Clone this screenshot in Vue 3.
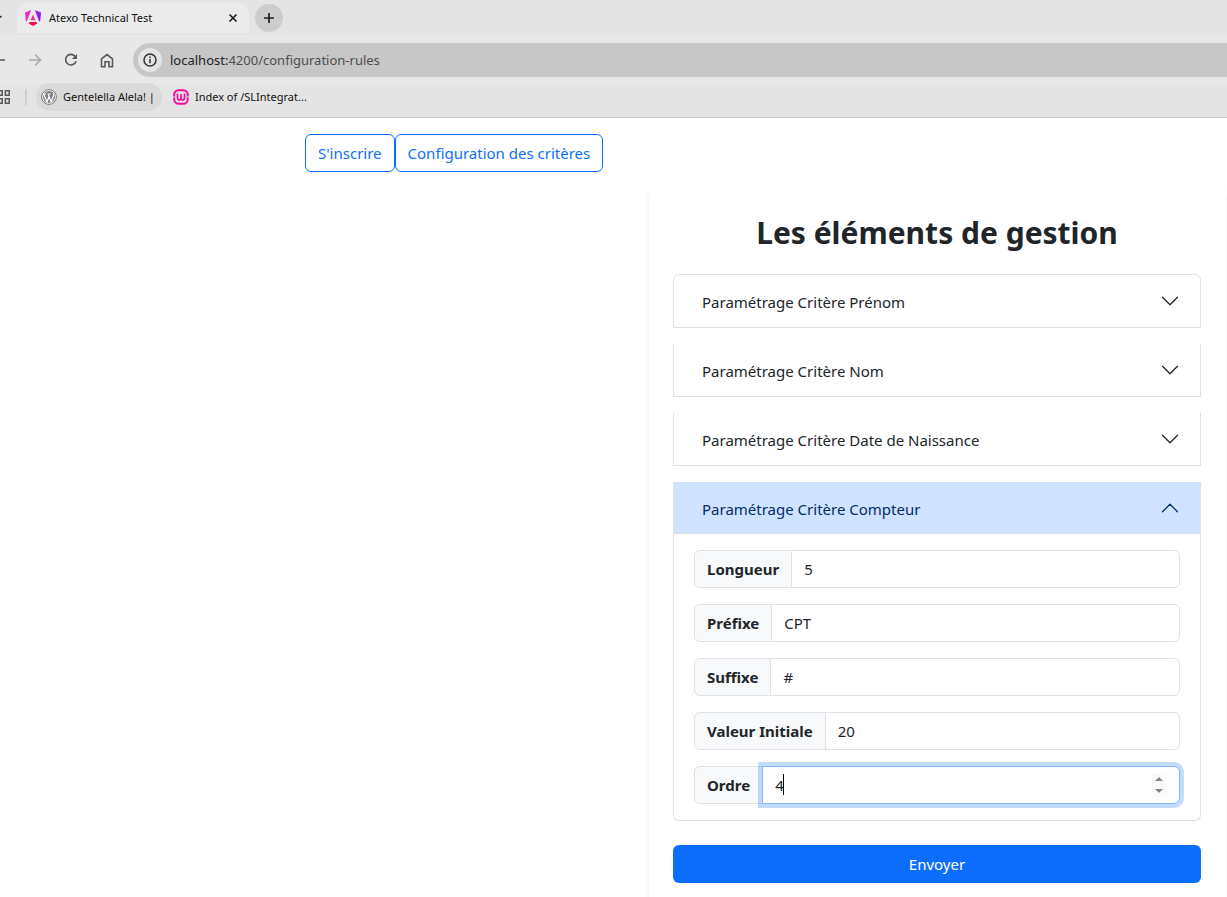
<script setup>
import { ref } from 'vue'

const closedPanels = ['Paramétrage Critère Prénom', 'Paramétrage Critère Nom', 'Paramétrage Critère Date de Naissance']
const fields = ref([
  { id: 'longueur', label: 'Longueur', value: '5', type: 'text' },
  { id: 'prefixe', label: 'Préfixe', value: 'CPT', type: 'text' },
  { id: 'suffixe', label: 'Suffixe', value: '#', type: 'text' },
  { id: 'initiale', label: 'Valeur Initiale', value: '20', type: 'text' },
  { id: 'ordre', label: 'Ordre', value: '4', type: 'number', active: true }
])
</script>

<template>
  <div class="window">
    <header class="chrome">
      <div class="tabs">
        <span class="tab-search"><svg width="4" height="12" viewBox="0 0 4 12"><path d="M0 5.500L1.500 4" stroke="#222" stroke-width="1.500" /></svg></span>
        <div class="tab">
          <svg class="tab-icon" width="16" height="16" viewBox="0 0 16 16">
            <defs>
              <linearGradient id="shield" x1="0" y1="0" x2="1" y2="0">
                <stop offset="0" stop-color="#f02fc0" /><stop offset=".5" stop-color="#e02bd0" /><stop offset="1" stop-color="#7a14f5" />
              </linearGradient>
            </defs>
            <path d="M0 2.500L6.200 0L1.800 11.500L.8 11ZM16 2.500L9.800 0L14.200 11.500L15.200 11Z" fill="url(#shield)" />
            <path d="M8 4.500L10.500 10.300H5.500Z" fill="#ee2a9c" />
            <path d="M4.500 12H11.500L12.300 13.600L8 16L3.700 13.600Z" fill="#f5104c" />
          </svg>
          <span class="tab-title">Atexo Technical Test</span>
          <button class="tab-close" aria-label="Fermer">
            <svg width="10" height="10" viewBox="0 0 10 10"><path d="M1.500 1.500L8.500 8.500M8.500 1.500L1.500 8.500" stroke="#1f1f1f" stroke-width="1.700" /></svg>
          </button>
        </div>
        <button class="new-tab" aria-label="Nouvel onglet">
          <svg width="12" height="12" viewBox="0 0 12 12"><path d="M6 1V11M1 6H11" stroke="#1f1f1f" stroke-width="1.700" /></svg>
        </button>
      </div>
      <div class="toolbar">
        <button class="tool back" aria-label="Retour"><svg width="5" height="14" viewBox="0 0 5 14"><path d="M0 7H5" stroke="#5a5d61" stroke-width="1.600" /></svg></button>
        <button class="tool forward" aria-label="Avancer"><svg width="14" height="14" viewBox="0 0 14 14"><path d="M1 7H12.500M7 1.500L12.500 7L7 12.500" fill="none" stroke="#a9a9a9" stroke-width="1.600" /></svg></button>
        <button class="tool reload" aria-label="Actualiser"><svg width="14" height="14" viewBox="0 0 14 14"><path d="M12 8.200A5.300 5.300 0 1 1 11 3.300L12.500 5" fill="none" stroke="#55585c" stroke-width="1.600" /><path d="M13 1V6H8Z" fill="#55585c" /></svg></button>
        <button class="tool home" aria-label="Accueil"><svg width="14" height="15" viewBox="0 0 14 15"><path d="M1.500 13.700V5.800L7 1.500L12.500 5.800V13.700H9V8.800H5V13.700Z" fill="none" stroke="#55585c" stroke-width="1.600" /></svg></button>
        <div class="address">
          <span class="info"><svg width="16" height="16" viewBox="0 0 16 16"><circle cx="8" cy="8" r="6" fill="none" stroke="#333" stroke-width="1.500" /><path d="M8 7V11.300M8 4.500V6" stroke="#333" stroke-width="1.500" /></svg></span>
          <span><b>localhost:</b>4200/configuration-rules</span>
        </div>
      </div>
      <nav class="bookmarks">
        <svg class="apps" width="10" height="14" viewBox="0 0 10 14"><path d="M-3 .8H2.200V5.200H-3ZM5.400 .8H9.200V5.200H5.400ZM-3 8.800H2.200V13.200H-3ZM5.400 8.800H9.200V13.200H5.400Z" fill="none" stroke="#55585c" stroke-width="1.500" /></svg>
        <span class="separator"></span>
        <a class="bookmark hovered" href="#">
          <svg width="16" height="16" viewBox="0 0 16 16"><circle cx="8" cy="8" r="7.400" fill="#f4f4f4" stroke="#777" /><circle cx="8" cy="8" r="6" fill="#808080" /><path d="M2.600 5L6 13L8 7.500L10.200 13L13 5.500M2 5H5M6.500 5H9.500M7.200 5L8.500 8.500M12 4.500L13 6" fill="none" stroke="#fff" stroke-width="1.200" /></svg>
          <span>Gentelella Alela! |</span>
        </a>
        <a class="bookmark" href="#">
          <svg width="16" height="16" viewBox="0 0 16 16"><rect x="1.200" y="1.200" width="13.600" height="13.600" rx="4.500" fill="none" stroke="#fa0a9b" stroke-width="2" /><path d="M4.500 4.500V8.500Q4.500 11 6.200 11Q8 11 8 8.500V5V8.500Q8 11 9.800 11Q11.500 11 11.500 8.500V4.500" fill="none" stroke="#fa0a9b" stroke-width="1.700" /><path d="M0 8H2.500M13.500 8H16" stroke="#e4e4e4" /></svg>
          <span>Index of /SLIntegrat...</span>
        </a>
      </nav>
    </header>

    <nav class="page-nav">
      <a class="outline" href="#">S'inscrire</a>
      <a class="outline" href="#">Configuration des critères</a>
    </nav>

    <main class="page">
      <form class="card" @submit.prevent>
        <h2>Les éléments de gestion</h2>
        <div class="accordion">
          <section v-for="panel in closedPanels" :key="panel" class="item">
            <button type="button" class="item-head" aria-expanded="false">
              <span>{{ panel }}</span>
              <svg width="20" height="20" viewBox="0 0 16 16"><path d="M2 5L8 11L14 5" fill="none" stroke="#212529" stroke-linecap="round" stroke-linejoin="round" /></svg>
            </button>
          </section>
          <section class="item">
            <button type="button" class="item-head open" aria-expanded="true">
              <span>Paramétrage Critère Compteur</span>
              <svg width="20" height="20" viewBox="0 0 16 16"><path d="M2 11L8 5L14 11" fill="none" stroke="#052c65" stroke-linecap="round" stroke-linejoin="round" /></svg>
            </button>
            <div class="item-body">
              <div v-for="field in fields" :key="field.id" class="group">
                <label :for="field.id">{{ field.label }}</label>
                <div class="control" :class="{ active: field.active }">
                  <input :id="field.id" v-model="field.value" :type="field.type" />
                  <template v-if="field.active">
                    <span class="caret"></span>
                    <svg class="spinner" width="15" height="24" viewBox="0 0 15 24"><rect width="15" height="24" fill="#fafafa" /><path d="M3 8L7 4L11 8ZM3 16L7 20L11 16Z" fill="#858585" /></svg>
                  </template>
                </div>
              </div>
            </div>
          </section>
        </div>
        <button class="submit" type="submit">Envoyer</button>
      </form>
    </main>
  </div>
</template>

<style>
html, body { margin: 0; overflow: hidden; }
</style>

<style scoped>
* { box-sizing: border-box; }
.window { height: 100vh; overflow: hidden; background: #fff; color: #212529; font: 15px/24px "Segoe UI", "Noto Sans", sans-serif; }
button { font: inherit; color: inherit; border: 0; margin: 0; padding: 0; background: none; }
svg { flex: none; display: block; }
a { text-decoration: none; }
.chrome { height: 118px; background: #e4e4e4; border-bottom: 1px solid #c6c6c6; color: #111; font-size: 11px; line-height: 16px; }
.tabs { display: flex; align-items: center; height: 35px; }
.tab-search { width: 17px; flex: none; }
.tab { display: flex; align-items: center; width: 232px; height: 30px; padding: 0 11px 0 8px; border-radius: 10px 10px 0 0; background: #ebebeb; }
.tab-title { margin-left: 8px; flex: 1; white-space: nowrap; }
.new-tab { display: grid; place-items: center; width: 28px; height: 28px; margin-left: 6px; border-radius: 50%; background: #cdcdcd; }
.toolbar { display: flex; align-items: center; height: 50px; background: #e8e8e8; }
.tool { flex: none; }
.forward { margin-left: 23px; }
.reload { margin-left: 22px; }
.home { margin-left: 22px; }
.address { flex: 1; display: flex; align-items: center; gap: 8px; height: 34px; margin-left: 19px; padding-left: 5px; border-radius: 17px 0 0 17px; background: #c7c7c7; color: #4d4d4d; font-size: 13px; }
.address b { font-weight: 400; color: #222; }
.info { display: grid; place-items: center; width: 24px; height: 24px; border-radius: 50%; background: #e4e4e4; }
.bookmarks { display: flex; align-items: center; height: 24px; }
.separator { width: 2px; height: 16px; margin: 0 9px 0 15px; background: #cfcfcf; }
.bookmark { display: flex; align-items: center; gap: 6px; height: 28px; padding: 0 5px; border-radius: 14px; color: #111; white-space: nowrap; }
.bookmark.hovered { background: #dadada; margin-right: 6px; padding-right: 7px; }
.page-nav { display: flex; padding: 16px 16px 16px 305px; }
.outline { padding: 6px 12px; border: 1px solid #0d6efd; border-radius: 6px; color: #0d6efd; }
.page { padding: 0 1px 0 649px; }
.card { padding: 24px 25px 24px 24px; border-radius: 6px; box-shadow: 0 2px 4px rgba(0, 0, 0, .075); }
h2 { margin: 0 0 22px; padding-top: 2px; font-size: 30px; line-height: 38px; font-weight: 700; text-align: center; }
.accordion { display: grid; gap: 16px; }
.item { border: 1px solid #dee2e6; border-top: 0; }
.item:first-child { border-top: 1px solid #dee2e6; border-radius: 6px 6px 0 0; }
.item:last-child { border-radius: 0 0 6px 6px; }
.item-head { display: flex; align-items: center; justify-content: space-between; width: 100%; height: 52px; padding: 0 20px 0 28px; text-align: left; }
.item-head.open { background: #cfe2ff; color: #052c65; box-shadow: inset 0 -1px 0 #dee2e6; }
.item-head span { padding-top: 2px; }
.item-body { display: grid; gap: 16px; padding: 16px 20px; }
.group { display: flex; height: 38px; }
label { padding: 6px 12px; border: 1px solid #dee2e6; border-radius: 6px 0 0 6px; background: #f8f9fa; font-weight: 700; white-space: nowrap; }
.control { flex: 1; position: relative; margin-left: -1px; }
input { width: 100%; height: 100%; padding: 6px 12px; border: 1px solid #dee2e6; border-radius: 0 6px 6px 0; outline: 0; background: #fff; color: #212529; font: inherit; appearance: textfield; }
input::-webkit-inner-spin-button { appearance: none; }
.active input { border-color: #86b7fe; box-shadow: 0 0 0 4px rgba(13, 110, 253, .25); }
.caret { position: absolute; left: 21px; top: 8px; width: 1px; height: 21px; background: #000; }
.spinner { position: absolute; right: 13px; top: 7px; }
.submit { display: block; width: 100%; height: 38px; margin-top: 24px; border-radius: 6px; background: #0d6efd; color: #fff; }
</style>
